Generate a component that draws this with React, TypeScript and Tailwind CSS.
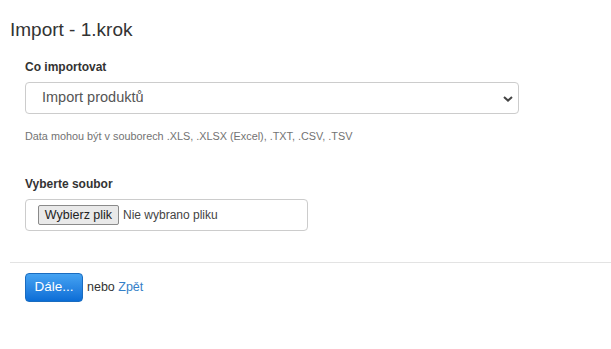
export default function App() {
  return (
    <div className="min-h-screen bg-white pt-[19px] pl-[10px] text-[#333]" style={{ fontFamily: '"Liberation Sans", Arial, sans-serif' }}>
      <h1 className="text-[19px] leading-[22px] font-normal">Import - 1.krok</h1>

      <div className="pl-[15px]">
        <label className="mt-[18px] block text-[12px] leading-4 font-bold">Co importovat</label>
        <div className="mt-[7px] flex h-[32px] w-[494px] items-center justify-between rounded-[4px] border border-[#ccc] bg-white pr-[5px] pl-[16px]">
          <span className="text-[14.5px] text-[#555]">Import produktů</span>
          <svg width="10" height="6" viewBox="0 0 10 6" className="mt-px">
            <path d="M1 1 L5 4.6 L9 1" fill="none" stroke="#444" strokeWidth="2" />
          </svg>
        </div>
        <p className="mt-[15px] text-[10.85px] leading-[15px] text-[#737373]">
          Data mohou být v souborech .XLS, .XLSX (Excel), .TXT, .CSV, .TSV
        </p>

        <label className="mt-[32px] block text-[12px] leading-4 font-bold">Vyberte soubor</label>
        <div className="mt-[7px] flex h-[32px] w-[283px] items-center gap-[4px] rounded-[4px] border border-[#ccc] bg-white pl-[12px]">
          <span className="flex h-[20px] w-[81px] items-center justify-center rounded-[2px] border border-[#8a8a8a] bg-[#e9e9e9] text-[12.5px] text-[#222]">
            Wybierz plik
          </span>
          <span className="text-[12px] text-[#444]">Nie wybrano pliku</span>
        </div>
      </div>

      <hr className="mt-[31px] border-t border-[#e3e3e3]" />

      <div className="mt-[10px] flex items-center gap-[4px] pl-[15px]">
        <button className="h-[29px] w-[58px] rounded-[4px] border border-[#1a6cc0] bg-gradient-to-b from-[#45a3f2] to-[#0a6dd6] text-[13.5px] text-white">
          Dále...
        </button>
        <span className="text-[12.5px]">
          nebo <a className="text-[#3580c8]">Zpět</a>
        </span>
      </div>
    </div>
  );
}
